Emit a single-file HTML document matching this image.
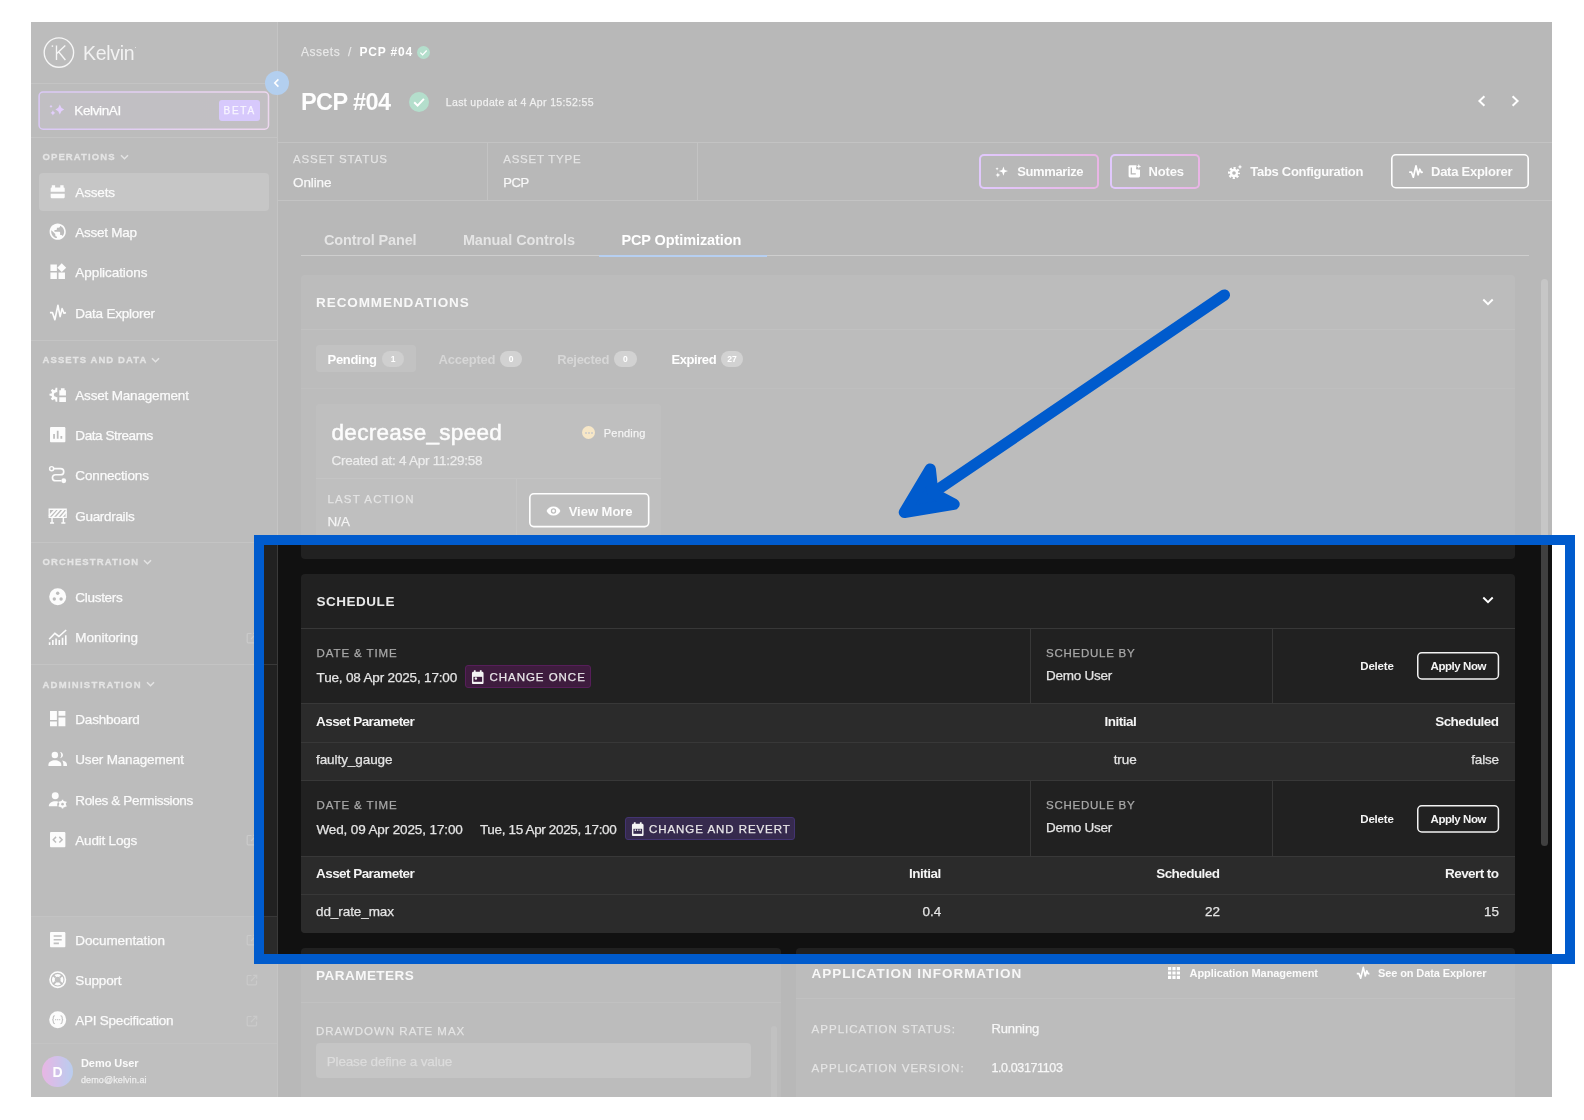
<!DOCTYPE html>
<html><head><meta charset="utf-8"><title>Kelvin - PCP #04 Schedule</title>
<style>
html,body{margin:0;padding:0;}
body{width:1584px;height:1120px;background:#fff;position:relative;overflow:hidden;font-family:"Liberation Sans",sans-serif;}
.a{position:absolute;box-sizing:border-box;}
.t{white-space:nowrap;}
#app{position:absolute;left:0;top:0;width:1584px;height:1120px;clip-path:inset(22px 32px 23px 31px);will-change:transform;}
.ov{position:absolute;background:rgba(255,255,255,0.70);}
</style></head><body>
<div id="app">
<div class="a " style="left:31.0px;top:22.0px;width:1521.0px;height:1075.0px;background:#111111;"></div>
<div class="a " style="left:31.0px;top:22.0px;width:246.0px;height:1075.0px;background:#212121;"></div>
<div class="a " style="left:31.0px;top:916.0px;width:246.0px;height:181.0px;background:#2a2a2a;"></div>
<div class="a " style="left:277.0px;top:22.0px;width:1.0px;height:1075.0px;background:#3a3a3a;"></div>
<svg class="a" style="left:42.00px;top:36.00px;" width="34" height="34" viewBox="0 0 34 34"><circle cx="16.9" cy="16.55" r="14.7" fill="none" stroke="#e0e0e0" stroke-width="1.35"/><path d="M14.5 9.5V24M23.3 9.5L14.8 17.6M16.6 15.7L23.4 24" fill="none" stroke="#e0e0e0" stroke-width="1.35"/><circle cx="10.4" cy="10.1" r="0.85" fill="#e0e0e0"/></svg>
<div class="a t" style="left:83.00px;top:41.50px;font-size:19.5px;line-height:23.00px;color:#d4d4d4;-webkit-text-stroke:0.25px #d4d4d4;letter-spacing:-0.322px;-webkit-text-stroke:0;">Kelvin</div>
<div class="a " style="left:134.6px;top:46.8px;width:1.5px;height:1.5px;background:#c8c8c8;border-radius:1px;"></div>
<div class="a " style="left:31.0px;top:83.0px;width:246.0px;height:1.0px;background:#393939;"></div>
<svg class="a" style="left:37.00px;top:90.00px;" width="234" height="42" viewBox="0 0 234 42"><defs><linearGradient id="kg" x1="0" y1="0" x2="1" y2="0"><stop offset="0" stop-color="#8448de"/><stop offset="1" stop-color="#c478c8"/></linearGradient><linearGradient id="kb" x1="0" y1="0" x2="1" y2="0"><stop offset="0" stop-color="#2f2938"/><stop offset="1" stop-color="#322a37"/></linearGradient></defs><rect x="2.1" y="2" width="229.4" height="37.2" rx="4" fill="url(#kb)" stroke="url(#kg)" stroke-width="1.5"/></svg>
<svg class="a" style="left:0.00px;top:0.00px;" width="80" height="130" viewBox="0 0 80 130"><path d="M59.80 104.50L61.38 107.70L64.20 109.50L61.38 111.30L59.80 114.50L58.22 111.30L55.40 109.50L58.22 107.70Z" fill="#a05cf5"/><path d="M52.90 110.20L53.80 111.93L55.40 112.90L53.80 113.87L52.90 115.60L52.00 113.87L50.40 112.90L52.00 111.93Z" fill="#a05cf5"/><path d="M51.00 104.70L51.54 105.72L52.50 106.30L51.54 106.88L51.00 107.90L50.46 106.88L49.50 106.30L50.46 105.72Z" fill="#a05cf5"/></svg>
<div class="a t" style="left:74.30px;top:102.50px;font-size:13.5px;line-height:16.00px;color:#f7f7f7;-webkit-text-stroke:0.25px #f7f7f7;letter-spacing:-0.375px;">KelvinAI</div>
<div class="a " style="left:219.1px;top:99.6px;width:40.9px;height:21.5px;background:#7a4cf5;border-radius:3px;"></div>
<div class="a t" style="left:223.60px;top:104.50px;font-size:10px;line-height:12.00px;color:#e7defd;-webkit-text-stroke:0.25px #e7defd;letter-spacing:1.708px;">BETA</div>
<div class="a " style="left:31.0px;top:137.0px;width:246.0px;height:1.0px;background:#393939;"></div>
<div class="a t" style="left:42.50px;top:151.00px;font-size:9.5px;line-height:11.00px;color:#a8a8a8;font-weight:700;letter-spacing:1.099px;-webkit-text-stroke:0.3px #a8a8a8;">OPERATIONS</div>
<svg class="a" style="left:119.70px;top:153.80px;" width="9" height="6" viewBox="0 0 9 6"><path d="M1 1.2L4.5 4.7L8 1.2" fill="none" stroke="#a3a3a3" stroke-width="1.5"/></svg>
<div class="a " style="left:38.6px;top:172.6px;width:230.4px;height:38.2px;background:#404040;border-radius:4px;"></div>
<div class="a t" style="left:75.30px;top:184.50px;font-size:13.5px;line-height:16.00px;color:#f0f0f0;-webkit-text-stroke:0.25px #f0f0f0;letter-spacing:-0.143px;">Assets</div>
<svg class="a" style="left:48.10px;top:182.20px;" width="19.4" height="19.4" viewBox="0 0 24 24"><path d="M4.7 4h4.1v3H4.7zM15.2 4h4.1v3h-4.1zM4.3 6.9h15.4c.6 0 1 .4 1 1v4.2H3.3V7.9c0-.6.4-1 1-1zM3.3 14.6h17.4V19c0 .6-.4 1-1 1H4.3c-.6 0-1-.4-1-1z" fill="#f5f5f5"/></svg>
<div class="a t" style="left:75.30px;top:224.50px;font-size:13.5px;line-height:16.00px;color:#f0f0f0;-webkit-text-stroke:0.25px #f0f0f0;letter-spacing:-0.247px;">Asset Map</div>
<svg class="a" style="left:48.10px;top:222.10px;" width="19.4" height="19.4" viewBox="0 0 24 24"><path d="M12 2C6.48 2 2 6.48 2 12s4.48 10 10 10 10-4.48 10-10S17.52 2 12 2zm-1 17.93c-3.95-.49-7-3.85-7-7.93 0-.62.08-1.21.21-1.79L9 15v1c0 1.1.9 2 2 2v1.93zm6.9-2.54c-.26-.81-1-1.39-1.9-1.39h-1v-3c0-.55-.45-1-1-1H8v-2h2c.55 0 1-.45 1-1V7h2c1.1 0 2-.9 2-2v-.41c2.93 1.19 5 4.06 5 7.41 0 2.08-.8 3.97-2.1 5.39z" fill="#f5f5f5"/></svg>
<div class="a t" style="left:75.30px;top:264.50px;font-size:13.5px;line-height:16.00px;color:#f0f0f0;-webkit-text-stroke:0.25px #f0f0f0;letter-spacing:-0.063px;">Applications</div>
<svg class="a" style="left:48.10px;top:262.40px;" width="19.4" height="19.4" viewBox="0 0 24 24"><path d="M3 3h8v8H3zM3 13h8v8H3zM13 13h8v8h-8zM17 1.5l5.5 5.5-5.5 5.5-5.5-5.5z" fill="#f5f5f5"/></svg>
<div class="a t" style="left:75.30px;top:305.50px;font-size:13.5px;line-height:16.00px;color:#f0f0f0;-webkit-text-stroke:0.25px #f0f0f0;letter-spacing:-0.236px;">Data Explorer</div>
<svg class="a" style="left:48.10px;top:302.90px;" width="19.4" height="19.4" viewBox="0 0 24 24"><path d="M2.4 11.9H5.5L8.5 20.7L12.3 2.8L15 16.8L17.4 6.9L19.8 12.6L22.2 11.9" fill="none" stroke="#f5f5f5" stroke-width="2" stroke-linejoin="round"/></svg>
<div class="a " style="left:31.0px;top:340.0px;width:246.0px;height:1.0px;background:#393939;"></div>
<div class="a t" style="left:42.50px;top:354.00px;font-size:9.5px;line-height:11.00px;color:#a8a8a8;font-weight:700;letter-spacing:1.093px;-webkit-text-stroke:0.3px #a8a8a8;">ASSETS AND DATA</div>
<svg class="a" style="left:151.40px;top:356.50px;" width="9" height="6" viewBox="0 0 9 6"><path d="M1 1.2L4.5 4.7L8 1.2" fill="none" stroke="#a3a3a3" stroke-width="1.5"/></svg>
<div class="a t" style="left:75.30px;top:387.50px;font-size:13.5px;line-height:16.00px;color:#f0f0f0;-webkit-text-stroke:0.25px #f0f0f0;letter-spacing:-0.180px;">Asset Management</div>
<svg class="a" style="left:48.10px;top:384.60px;" width="19.4" height="19.4" viewBox="0 0 24 24"><path d="M14 6.5h2V4h4.5v2.5h1.7V13H14zM14 15.2h8.2V21H14z" fill="#f5f5f5"/><path d="M11.5 3.3v17.4H9.4l-.5-2.6-1.3-.6-2.2 1.5-1.9-1.9 1.5-2.2-.6-1.3-2.6-.5V10.9l2.6-.5.6-1.3-1.5-2.2 1.9-1.9 2.2 1.5 1.3-.6.5-2.6z" fill="#f5f5f5"/><circle cx="9.8" cy="12" r="2.6" fill="#212121"/><path d="M9.8 9h2.5v6H9.8z" fill="#212121"/></svg>
<div class="a t" style="left:75.30px;top:427.50px;font-size:13.5px;line-height:16.00px;color:#f0f0f0;-webkit-text-stroke:0.25px #f0f0f0;letter-spacing:-0.420px;">Data Streams</div>
<svg class="a" style="left:48.10px;top:424.90px;" width="19.4" height="19.4" viewBox="0 0 24 24"><path d="M4 2.5h16c.8 0 1.5.7 1.5 1.5v16c0 .8-.7 1.5-1.5 1.5H4c-.8 0-1.5-.7-1.5-1.5V4c0-.8.7-1.5 1.5-1.5z" fill="#f5f5f5"/><path d="M7.5 11v6M12 7v10M16.5 13.5v3.5" stroke="#212121" stroke-width="2.2"/></svg>
<div class="a t" style="left:75.30px;top:467.50px;font-size:13.5px;line-height:16.00px;color:#f0f0f0;-webkit-text-stroke:0.25px #f0f0f0;letter-spacing:-0.144px;">Connections</div>
<svg class="a" style="left:48.10px;top:465.30px;" width="19.4" height="19.4" viewBox="0 0 24 24"><circle cx="4.5" cy="4.5" r="2.5" fill="none" stroke="#f5f5f5" stroke-width="1.8"/><circle cx="19.5" cy="19.5" r="3" fill="#f5f5f5"/><path d="M7 4.5h8.5c2.5 0 4 1.5 4 3.7s-1.5 3.8-4 3.8h-6c-2.5 0-4 1.5-4 3.7s1.5 3.8 4 3.8h7" fill="none" stroke="#f5f5f5" stroke-width="2"/></svg>
<div class="a t" style="left:75.30px;top:508.50px;font-size:13.5px;line-height:16.00px;color:#f0f0f0;-webkit-text-stroke:0.25px #f0f0f0;letter-spacing:-0.319px;">Guardrails</div>
<svg class="a" style="left:48.10px;top:505.60px;" width="19.4" height="19.4" viewBox="0 0 24 24"><path d="M1.5 4h21v10h-21z" fill="none" stroke="#f5f5f5" stroke-width="1.6"/><path d="M1.5 12.5L9 4.5M5.5 14l8.5-9.5M11 14l8.5-9.5M16.5 14l6-7" stroke="#f5f5f5" stroke-width="2.4"/><path d="M5 14v7M19 14v7M2.5 21h5M16.5 21h5" stroke="#f5f5f5" stroke-width="1.8"/></svg>
<div class="a " style="left:31.0px;top:542.0px;width:246.0px;height:1.0px;background:#393939;"></div>
<div class="a t" style="left:42.50px;top:556.00px;font-size:9.5px;line-height:11.00px;color:#a8a8a8;font-weight:700;letter-spacing:1.112px;-webkit-text-stroke:0.3px #a8a8a8;">ORCHESTRATION</div>
<svg class="a" style="left:142.80px;top:558.80px;" width="9" height="6" viewBox="0 0 9 6"><path d="M1 1.2L4.5 4.7L8 1.2" fill="none" stroke="#a3a3a3" stroke-width="1.5"/></svg>
<div class="a t" style="left:75.30px;top:589.50px;font-size:13.5px;line-height:16.00px;color:#f0f0f0;-webkit-text-stroke:0.25px #f0f0f0;letter-spacing:-0.287px;">Clusters</div>
<svg class="a" style="left:48.10px;top:587.20px;" width="19.4" height="19.4" viewBox="0 0 24 24"><circle cx="12" cy="12" r="10.5" fill="#f5f5f5"/><circle cx="12" cy="7.8" r="2.1" fill="#212121"/><circle cx="7.8" cy="14.8" r="2.1" fill="#212121"/><circle cx="16.2" cy="14.8" r="2.1" fill="#212121"/></svg>
<div class="a t" style="left:75.30px;top:629.50px;font-size:13.5px;line-height:16.00px;color:#f0f0f0;-webkit-text-stroke:0.25px #f0f0f0;letter-spacing:-0.036px;">Monitoring</div>
<svg class="a" style="left:48.10px;top:627.50px;" width="19.4" height="19.4" viewBox="0 0 24 24"><path d="M2 21v-3.5M6 21v-6M10 21v-8M14 21v-6M18 21v-9M22 21V9" stroke="#f5f5f5" stroke-width="2"/><path d="M1.5 14l7-7.5 5 4L22.5 2.5" fill="none" stroke="#f5f5f5" stroke-width="2"/></svg>
<svg class="a" style="left:245.80px;top:631.60px;" width="12" height="12" viewBox="0 0 12 12"><path d="M5.5 1.5H2.2C1.6 1.5 1.2 1.9 1.2 2.5V9.8C1.2 10.4 1.6 10.8 2.2 10.8H9.5C10.1 10.8 10.5 10.4 10.5 9.8V6.5" fill="none" stroke="#4d4d4d" stroke-width="1.2"/><path d="M5 7L10.3 1.7M7.2 1.3H10.7V4.8" fill="none" stroke="#4d4d4d" stroke-width="1.2"/></svg>
<div class="a " style="left:31.0px;top:664.0px;width:246.0px;height:1.0px;background:#393939;"></div>
<div class="a t" style="left:42.50px;top:679.00px;font-size:9.5px;line-height:11.00px;color:#a8a8a8;font-weight:700;letter-spacing:1.260px;-webkit-text-stroke:0.3px #a8a8a8;">ADMINISTRATION</div>
<svg class="a" style="left:145.70px;top:680.90px;" width="9" height="6" viewBox="0 0 9 6"><path d="M1 1.2L4.5 4.7L8 1.2" fill="none" stroke="#a3a3a3" stroke-width="1.5"/></svg>
<div class="a t" style="left:75.30px;top:711.50px;font-size:13.5px;line-height:16.00px;color:#f0f0f0;-webkit-text-stroke:0.25px #f0f0f0;letter-spacing:-0.205px;">Dashboard</div>
<svg class="a" style="left:48.10px;top:709.40px;" width="19.4" height="19.4" viewBox="0 0 24 24"><path d="M2.5 2.5h8.5v11H2.5zM13 2.5h8.5v6H13zM13 10.5h8.5v11H13zM2.5 15.5h8.5v6H2.5z" fill="#f5f5f5"/></svg>
<div class="a t" style="left:75.30px;top:751.50px;font-size:13.5px;line-height:16.00px;color:#f0f0f0;-webkit-text-stroke:0.25px #f0f0f0;letter-spacing:-0.175px;">User Management</div>
<svg class="a" style="left:48.10px;top:749.20px;" width="19.4" height="19.4" viewBox="0 0 24 24"><circle cx="8.5" cy="7.5" r="4" fill="#f5f5f5"/><path d="M.5 19.5c0-3.5 4-5.5 8-5.5s8 2 8 5.5V21h-16z" fill="#f5f5f5"/><path d="M15 3.7c2 .3 3.5 1.8 3.5 3.8s-1.5 3.5-3.5 3.8c.9-1 1.4-2.3 1.4-3.8s-.5-2.8-1.4-3.8zM17.5 14.3c3 .5 6 2.2 6 5.2V21h-4.5v-1.8c0-2-.6-3.7-1.5-4.9z" fill="#f5f5f5"/></svg>
<div class="a t" style="left:75.30px;top:792.50px;font-size:13.5px;line-height:16.00px;color:#f0f0f0;-webkit-text-stroke:0.25px #f0f0f0;letter-spacing:-0.369px;">Roles &amp; Permissions</div>
<svg class="a" style="left:48.10px;top:789.70px;" width="19.4" height="19.4" viewBox="0 0 24 24"><circle cx="9" cy="7" r="4.3" fill="#f5f5f5"/><path d="M1 20c0-4 4-6 8-6 1.3 0 2.6.2 3.8.6-1.1 1.3-1.6 2.8-1.4 4.4l.2 1z" fill="#f5f5f5"/><circle cx="18" cy="17.5" r="4.2" fill="#f5f5f5"/><path d="M18 12v11M13.2 14.8l9.6 5.4M22.8 14.8l-9.6 5.4" stroke="#f5f5f5" stroke-width="1.8"/><circle cx="18" cy="17.5" r="1.6" fill="#212121"/></svg>
<div class="a t" style="left:75.30px;top:832.50px;font-size:13.5px;line-height:16.00px;color:#f0f0f0;-webkit-text-stroke:0.25px #f0f0f0;letter-spacing:-0.199px;">Audit Logs</div>
<svg class="a" style="left:48.10px;top:829.90px;" width="19.4" height="19.4" viewBox="0 0 24 24"><path d="M4 2.5h16c.8 0 1.5.7 1.5 1.5v16c0 .8-.7 1.5-1.5 1.5H4c-.8 0-1.5-.7-1.5-1.5V4c0-.8.7-1.5 1.5-1.5z" fill="#f5f5f5"/><path d="M10 8.5L6.5 12l3.5 3.5M14 8.5l3.5 3.5-3.5 3.5" fill="none" stroke="#212121" stroke-width="1.8"/></svg>
<svg class="a" style="left:245.80px;top:834.00px;" width="12" height="12" viewBox="0 0 12 12"><path d="M5.5 1.5H2.2C1.6 1.5 1.2 1.9 1.2 2.5V9.8C1.2 10.4 1.6 10.8 2.2 10.8H9.5C10.1 10.8 10.5 10.4 10.5 9.8V6.5" fill="none" stroke="#4d4d4d" stroke-width="1.2"/><path d="M5 7L10.3 1.7M7.2 1.3H10.7V4.8" fill="none" stroke="#4d4d4d" stroke-width="1.2"/></svg>
<div class="a " style="left:31.0px;top:916.0px;width:246.0px;height:1.0px;background:#383838;"></div>
<div class="a t" style="left:75.30px;top:932.50px;font-size:13.5px;line-height:16.00px;color:#f0f0f0;-webkit-text-stroke:0.25px #f0f0f0;letter-spacing:-0.091px;">Documentation</div>
<svg class="a" style="left:48.10px;top:929.60px;" width="19.4" height="19.4" viewBox="0 0 24 24"><path d="M4 2.5h16c.8 0 1.5.7 1.5 1.5v16c0 .8-.7 1.5-1.5 1.5H4c-.8 0-1.5-.7-1.5-1.5V4c0-.8.7-1.5 1.5-1.5z" fill="#f5f5f5"/><path d="M7 7.5h10M7 12h10M7 16.5h6.5" stroke="#2a2a2a" stroke-width="2"/></svg>
<svg class="a" style="left:245.80px;top:933.70px;" width="12" height="12" viewBox="0 0 12 12"><path d="M5.5 1.5H2.2C1.6 1.5 1.2 1.9 1.2 2.5V9.8C1.2 10.4 1.6 10.8 2.2 10.8H9.5C10.1 10.8 10.5 10.4 10.5 9.8V6.5" fill="none" stroke="#4d4d4d" stroke-width="1.2"/><path d="M5 7L10.3 1.7M7.2 1.3H10.7V4.8" fill="none" stroke="#4d4d4d" stroke-width="1.2"/></svg>
<div class="a t" style="left:75.30px;top:972.50px;font-size:13.5px;line-height:16.00px;color:#f0f0f0;-webkit-text-stroke:0.25px #f0f0f0;letter-spacing:-0.163px;">Support</div>
<svg class="a" style="left:48.10px;top:970.20px;" width="19.4" height="19.4" viewBox="0 0 24 24"><circle cx="12" cy="12" r="10.5" fill="#f5f5f5"/><circle cx="12" cy="12" r="7.8" fill="none" stroke="#2a2a2a" stroke-width="1.4"/><circle cx="12" cy="12" r="3.6" fill="#2a2a2a"/><path d="M6.3 6.3l3.2 3.2M17.7 6.3l-3.2 3.2M6.3 17.7l3.2-3.2M17.7 17.7l-3.2-3.2" stroke="#2a2a2a" stroke-width="2.4"/></svg>
<svg class="a" style="left:245.80px;top:974.30px;" width="12" height="12" viewBox="0 0 12 12"><path d="M5.5 1.5H2.2C1.6 1.5 1.2 1.9 1.2 2.5V9.8C1.2 10.4 1.6 10.8 2.2 10.8H9.5C10.1 10.8 10.5 10.4 10.5 9.8V6.5" fill="none" stroke="#4d4d4d" stroke-width="1.2"/><path d="M5 7L10.3 1.7M7.2 1.3H10.7V4.8" fill="none" stroke="#4d4d4d" stroke-width="1.2"/></svg>
<div class="a t" style="left:75.30px;top:1012.50px;font-size:13.5px;line-height:16.00px;color:#f0f0f0;-webkit-text-stroke:0.25px #f0f0f0;letter-spacing:-0.241px;">API Specification</div>
<svg class="a" style="left:48.10px;top:1010.40px;" width="19.4" height="19.4" viewBox="0 0 24 24"><circle cx="12" cy="12" r="10.5" fill="#f5f5f5"/><path d="M8.5 7c-1.5 0-2 .7-2 2v1.5c0 .8-.4 1.5-1.3 1.5.9 0 1.3.7 1.3 1.5V15c0 1.3.5 2 2 2M15.5 7c1.5 0 2 .7 2 2v1.5c0 .8.4 1.5 1.3 1.5-.9 0-1.3.7-1.3 1.5V15c0 1.3-.5 2-2 2" fill="none" stroke="#2a2a2a" stroke-width="1.3"/><path d="M9.5 12h.01M12 12h.01M14.5 12h.01" stroke="#2a2a2a" stroke-width="1.6" stroke-linecap="round"/></svg>
<svg class="a" style="left:245.80px;top:1014.50px;" width="12" height="12" viewBox="0 0 12 12"><path d="M5.5 1.5H2.2C1.6 1.5 1.2 1.9 1.2 2.5V9.8C1.2 10.4 1.6 10.8 2.2 10.8H9.5C10.1 10.8 10.5 10.4 10.5 9.8V6.5" fill="none" stroke="#4d4d4d" stroke-width="1.2"/><path d="M5 7L10.3 1.7M7.2 1.3H10.7V4.8" fill="none" stroke="#4d4d4d" stroke-width="1.2"/></svg>
<div class="a " style="left:31.0px;top:1043.0px;width:246.0px;height:1.0px;background:#383838;"></div>
<div class="a " style="left:42.0px;top:1056.0px;width:31.0px;height:31.0px;border-radius:50%;background:linear-gradient(90deg,#b20aa6,#1558c8);"></div>
<div class="a t" style="left:52.44px;top:1063.50px;font-size:14px;line-height:17.00px;color:#ffffff;font-weight:700;">D</div>
<div class="a t" style="left:81.00px;top:1056.50px;font-size:11px;line-height:13.00px;color:#f2f2f2;font-weight:700;letter-spacing:-0.072px;">Demo User</div>
<div class="a t" style="left:81.00px;top:1074.50px;font-size:9px;line-height:11.00px;color:#c8c8c8;-webkit-text-stroke:0.25px #c8c8c8;letter-spacing:0.103px;">demo@kelvin.ai</div>
<div class="a " style="left:265.0px;top:71.4px;width:24.0px;height:24.0px;background:#025fca;border-radius:50%;"></div>
<svg class="a" style="left:271.50px;top:78.40px;" width="10" height="10" viewBox="0 0 10 10"><path d="M6.4 1.4L2.8 5L6.4 8.6" fill="none" stroke="#fff" stroke-width="1.6"/></svg>
<div class="a t" style="left:301.00px;top:45.00px;font-size:12px;line-height:14.00px;color:#b5b5b5;-webkit-text-stroke:0.25px #b5b5b5;letter-spacing:0.538px;">Assets</div>
<div class="a t" style="left:347.93px;top:45.00px;font-size:12px;line-height:14.00px;color:#b5b5b5;-webkit-text-stroke:0.25px #b5b5b5;">/</div>
<div class="a t" style="left:359.40px;top:45.00px;font-size:12px;line-height:14.00px;color:#ffffff;font-weight:700;letter-spacing:0.848px;">PCP #04</div>
<svg class="a" style="left:417.30px;top:45.50px;" width="13" height="13" viewBox="0 0 20 20"><circle cx="10" cy="10" r="10" fill="#059155"/><path d="M5.2 10.2L8.6 13.6L14.9 6.9" fill="none" stroke="#fff" stroke-width="2"/></svg>
<div class="a t" style="left:301.00px;top:88.00px;font-size:23.5px;line-height:28.00px;color:#fafafa;font-weight:700;letter-spacing:-0.605px;">PCP #04</div>
<svg class="a" style="left:408.90px;top:91.60px;" width="20" height="20" viewBox="0 0 20 20"><circle cx="10" cy="10" r="10" fill="#059155"/><path d="M5.2 10.2L8.6 13.6L14.9 6.9" fill="none" stroke="#fff" stroke-width="2"/></svg>
<div class="a t" style="left:445.80px;top:95.50px;font-size:10.5px;line-height:13.00px;color:#d0d0d0;-webkit-text-stroke:0.25px #d0d0d0;letter-spacing:0.355px;">Last update at 4 Apr 15:52:55</div>
<svg class="a" style="left:1476.60px;top:95.40px;" width="10" height="12" viewBox="0 0 10 12"><path d="M7.4 1.2L2.4 6L7.4 10.8" fill="none" stroke="#fff" stroke-width="2"/></svg>
<svg class="a" style="left:1509.70px;top:95.40px;" width="10" height="12" viewBox="0 0 10 12"><path d="M2.6 1.2L7.6 6L2.6 10.8" fill="none" stroke="#fff" stroke-width="2"/></svg>
<div class="a " style="left:278.0px;top:142.0px;width:1274.0px;height:1.0px;background:#363636;"></div>
<div class="a " style="left:278.0px;top:199.5px;width:1274.0px;height:1.0px;background:#363636;"></div>
<div class="a " style="left:487.0px;top:142.0px;width:1.0px;height:58.0px;background:#363636;"></div>
<div class="a " style="left:697.0px;top:142.0px;width:1.0px;height:58.0px;background:#363636;"></div>
<div class="a t" style="left:293.00px;top:152.00px;font-size:11.5px;line-height:14.00px;color:#a8a8a8;-webkit-text-stroke:0.25px #a8a8a8;letter-spacing:0.877px;">ASSET STATUS</div>
<div class="a t" style="left:293.00px;top:174.50px;font-size:13.5px;line-height:16.00px;color:#e6e6e6;-webkit-text-stroke:0.25px #e6e6e6;letter-spacing:-0.104px;">Online</div>
<div class="a t" style="left:503.20px;top:152.00px;font-size:11.5px;line-height:14.00px;color:#a8a8a8;-webkit-text-stroke:0.25px #a8a8a8;letter-spacing:0.775px;">ASSET TYPE</div>
<div class="a t" style="left:503.20px;top:174.50px;font-size:13px;line-height:16.00px;color:#e6e6e6;-webkit-text-stroke:0.25px #e6e6e6;letter-spacing:-0.366px;">PCP</div>
<div class="a " style="left:979.0px;top:154.0px;width:119.6px;height:35.0px;border-radius:5px;background:linear-gradient(90deg,#9848f5,#b408a6);"></div>
<div class="a " style="left:981.0px;top:156.0px;width:115.6px;height:31.0px;background:#111111;border-radius:3px;"></div>
<svg class="a" style="left:995.00px;top:164.60px;" width="13.5" height="13" viewBox="0 0 17 16"><path d="M10.6 1.6 L12.1 6.0 L16.4 7.5 L12.1 9.0 L10.6 13.4 L9.1 9.0 L4.8 7.5 L9.1 6.0Z" fill="#fff"/><path d="M3.6 9.4 L4.4 11.6 L6.6 12.4 L4.4 13.2 L3.6 15.4 L2.8 13.2 L0.6 12.4 L2.8 11.6Z" fill="#fff"/><path d="M2.6 2.6 L3.2 4.0 L4.6 4.6 L3.2 5.2 L2.6 6.6 L2.0 5.2 L0.6 4.6 L2.0 4.0Z" fill="#fff"/></svg>
<div class="a t" style="left:1017.20px;top:163.50px;font-size:13px;line-height:16.00px;color:#f2f2f2;font-weight:700;letter-spacing:-0.383px;">Summarize</div>
<div class="a " style="left:1110.0px;top:154.0px;width:89.6px;height:35.0px;border-radius:5px;background:linear-gradient(90deg,#9848f5,#b408a6);"></div>
<div class="a " style="left:1112.0px;top:156.0px;width:85.6px;height:31.0px;background:#111111;border-radius:3px;"></div>
<svg class="a" style="left:1126.50px;top:164.30px;" width="14" height="14" viewBox="0 0 14 14"><path d="M3 1.2h6.5l-.5 4 4 .6V12c0 .8-.6 1.4-1.4 1.4H3c-.8 0-1.4-.6-1.4-1.4V2.6c0-.8.6-1.4 1.4-1.4z" fill="#fff"/><path d="M4.3 3.5v6.3h4.5" fill="none" stroke="#111" stroke-width="1.3"/><path d="M11.8 0l.7 1.7 1.7.7-1.7.7-.7 1.7-.7-1.7-1.7-.7 1.7-.7z" fill="#fff"/></svg>
<div class="a t" style="left:1148.60px;top:163.50px;font-size:13px;line-height:16.00px;color:#f2f2f2;font-weight:700;letter-spacing:-0.154px;">Notes</div>
<svg class="a" style="left:1227.20px;top:163.60px;" width="16" height="16" viewBox="0 0 16 16"><circle cx="7" cy="9" r="4.7" fill="none" stroke="#fff" stroke-width="2.6" stroke-dasharray="2.1 1.59" stroke-dashoffset="1.05"/><circle cx="7" cy="9" r="4.2" fill="#fff"/><circle cx="7" cy="9" r="1.8" fill="#111"/><path d="M13 .6l.7 1.6 1.6.7-1.6.7-.7 1.6-.7-1.6-1.6-.7 1.6-.7z" fill="#fff"/></svg>
<div class="a t" style="left:1250.30px;top:163.50px;font-size:13px;line-height:16.00px;color:#f2f2f2;font-weight:700;letter-spacing:-0.299px;">Tabs Configuration</div>
<svg class="a" style="left:1390.40px;top:153.20px;" width="140" height="36.5" viewBox="0 0 140 36.5"><rect x="1.80" y="1.80" width="136.40" height="32.90" rx="4" fill="none" stroke="#fff" stroke-width="1.6"/></svg>
<svg class="a" style="left:1407.80px;top:163.70px;" width="16" height="15" viewBox="0 0 16 15"><path d="M1.2 8.2h2.3l1.8 5L8 1.8l2.1 9 1.7-5.6 1.5 3.3 1.5-.3" fill="none" stroke="#fff" stroke-width="1.7" stroke-linejoin="round"/></svg>
<div class="a t" style="left:1431.00px;top:163.50px;font-size:13px;line-height:16.00px;color:#f2f2f2;font-weight:700;letter-spacing:-0.252px;">Data Explorer</div>
<div class="a " style="left:301.0px;top:255.0px;width:1228.0px;height:1.0px;background:#5a5a5a;"></div>
<div class="a " style="left:599.0px;top:254.5px;width:167.5px;height:2.0px;background:#0a5fd0;"></div>
<div class="a t" style="left:324.00px;top:231.50px;font-size:14.5px;line-height:17.00px;color:#a8a8a8;font-weight:700;letter-spacing:-0.138px;">Control Panel</div>
<div class="a t" style="left:462.90px;top:231.50px;font-size:14.5px;line-height:17.00px;color:#a8a8a8;font-weight:700;letter-spacing:-0.098px;">Manual Controls</div>
<div class="a t" style="left:621.40px;top:231.50px;font-size:14.5px;line-height:17.00px;color:#ffffff;font-weight:700;letter-spacing:-0.098px;">PCP Optimization</div>
<div class="a " style="left:301.0px;top:275.0px;width:1214.0px;height:284.0px;background:#212121;border-radius:4px;"></div>
<div class="a t" style="left:316.10px;top:294.50px;font-size:13.5px;line-height:16.00px;color:#e8e8e8;font-weight:700;letter-spacing:0.900px;">RECOMMENDATIONS</div>
<svg class="a" style="left:1481.50px;top:297.70px;" width="12" height="8" viewBox="0 0 12 8"><path d="M1.3 1.5L6 6.2L10.7 1.5" fill="none" stroke="#fff" stroke-width="1.9"/></svg>
<div class="a " style="left:301.0px;top:329.0px;width:1214.0px;height:1.0px;background:#303030;"></div>
<div class="a " style="left:301.0px;top:388.0px;width:1214.0px;height:1.0px;background:#292929;"></div>
<div class="a " style="left:316.0px;top:345.3px;width:100.0px;height:27.1px;background:#353535;border-radius:4px;"></div>
<div class="a t" style="left:327.50px;top:351.50px;font-size:13px;line-height:16.00px;color:#ffffff;font-weight:700;letter-spacing:-0.295px;">Pending</div>
<div class="a " style="left:382.0px;top:351.3px;width:22.4px;height:15.5px;background:#5e5e5e;border-radius:8px;"></div>
<div class="a t" style="left:390.84px;top:354.00px;font-size:8.5px;line-height:10.00px;color:#ffffff;font-weight:700;">1</div>
<div class="a t" style="left:438.60px;top:351.50px;font-size:13px;line-height:16.00px;color:#787878;font-weight:700;letter-spacing:-0.245px;">Accepted</div>
<div class="a " style="left:499.8px;top:351.3px;width:22.7px;height:15.5px;background:#6a6a6a;border-radius:8px;"></div>
<div class="a t" style="left:508.79px;top:354.00px;font-size:8.5px;line-height:10.00px;color:#ffffff;font-weight:700;">0</div>
<div class="a t" style="left:557.30px;top:351.50px;font-size:13px;line-height:16.00px;color:#787878;font-weight:700;letter-spacing:-0.284px;">Rejected</div>
<div class="a " style="left:613.9px;top:351.3px;width:22.7px;height:15.5px;background:#6a6a6a;border-radius:8px;"></div>
<div class="a t" style="left:622.89px;top:354.00px;font-size:8.5px;line-height:10.00px;color:#ffffff;font-weight:700;">0</div>
<div class="a t" style="left:671.40px;top:351.50px;font-size:13px;line-height:16.00px;color:#ffffff;font-weight:700;letter-spacing:-0.414px;">Expired</div>
<div class="a " style="left:720.6px;top:351.3px;width:22.8px;height:15.5px;background:#6a6a6a;border-radius:8px;"></div>
<div class="a t" style="left:727.27px;top:354.00px;font-size:8.5px;line-height:10.00px;color:#ffffff;font-weight:700;">27</div>
<div class="a " style="left:316.0px;top:404.0px;width:344.7px;height:139.0px;background:#2b2b2b;border-radius:4px;"></div>
<div class="a t" style="left:331.50px;top:419.00px;font-size:22.5px;line-height:27.00px;color:#f4f4f4;-webkit-text-stroke:0.25px #f4f4f4;letter-spacing:0.303px;-webkit-text-stroke:0.5px #f4f4f4;">decrease_speed</div>
<div class="a " style="left:582.3px;top:426.3px;width:13.2px;height:13.2px;background:#e4af44;border-radius:50%;"></div>
<div class="a " style="left:585.0px;top:432.0px;width:2.0px;height:2.0px;background:#505050;border-radius:1px;"></div>
<div class="a " style="left:588.0px;top:432.0px;width:2.0px;height:2.0px;background:#505050;border-radius:1px;"></div>
<div class="a " style="left:591.0px;top:432.0px;width:2.0px;height:2.0px;background:#505050;border-radius:1px;"></div>
<div class="a t" style="left:603.80px;top:426.50px;font-size:11px;line-height:13.00px;color:#dcdcdc;-webkit-text-stroke:0.25px #dcdcdc;letter-spacing:0.189px;">Pending</div>
<div class="a t" style="left:331.50px;top:452.50px;font-size:13.5px;line-height:16.00px;color:#c4c4c4;-webkit-text-stroke:0.25px #c4c4c4;letter-spacing:-0.258px;">Created at: 4 Apr 11:29:58</div>
<div class="a " style="left:316.0px;top:478.0px;width:344.7px;height:1.0px;background:#3a3a3a;"></div>
<div class="a " style="left:516.0px;top:478.0px;width:1.0px;height:65.0px;background:#3a3a3a;"></div>
<div class="a t" style="left:327.50px;top:492.00px;font-size:11.5px;line-height:14.00px;color:#a8a8a8;-webkit-text-stroke:0.25px #a8a8a8;letter-spacing:1.144px;">LAST ACTION</div>
<div class="a t" style="left:327.50px;top:513.50px;font-size:13.5px;line-height:16.00px;color:#dcdcdc;-webkit-text-stroke:0.25px #dcdcdc;">N/A</div>
<svg class="a" style="left:528.20px;top:492.40px;" width="122.5" height="36.4" viewBox="0 0 122.5 36.4"><rect x="1.80" y="1.80" width="118.90" height="32.80" rx="4" fill="none" stroke="#fff" stroke-width="1.6"/></svg>
<svg class="a" style="left:545.80px;top:505.30px;" width="15" height="12" viewBox="0 0 15 12"><path d="M7.5 1.5C4.2 1.5 1.7 3.5.6 6c1.1 2.5 3.6 4.5 6.9 4.5S13.3 8.5 14.4 6C13.3 3.5 10.8 1.5 7.5 1.5z" fill="#fff"/><circle cx="7.5" cy="6" r="2.7" fill="#212121"/><circle cx="7.5" cy="6" r="1.4" fill="#fff"/></svg>
<div class="a t" style="left:568.70px;top:503.50px;font-size:13px;line-height:16.00px;color:#f4f4f4;font-weight:700;letter-spacing:-0.020px;">View More</div>
<div class="a " style="left:301.0px;top:574.0px;width:1214.0px;height:359.0px;background:#212121;border-radius:4px;"></div>
<div class="a t" style="left:316.40px;top:593.50px;font-size:13.5px;line-height:16.00px;color:#e8e8e8;font-weight:700;letter-spacing:0.535px;">SCHEDULE</div>
<svg class="a" style="left:1481.60px;top:596.20px;" width="12" height="8" viewBox="0 0 12 8"><path d="M1.3 1.5L6 6.2L10.7 1.5" fill="none" stroke="#fff" stroke-width="1.9"/></svg>
<div class="a " style="left:301.0px;top:703.0px;width:1214.0px;height:77.0px;background:#2b2b2b;"></div>
<div class="a " style="left:301.0px;top:628.0px;width:1214.0px;height:1.0px;background:#383838;"></div>
<div class="a " style="left:301.0px;top:703.0px;width:1214.0px;height:1.0px;background:#383838;"></div>
<div class="a " style="left:301.0px;top:742.0px;width:1214.0px;height:1.0px;background:#383838;"></div>
<div class="a " style="left:1030.0px;top:628.0px;width:1.0px;height:75.0px;background:#383838;"></div>
<div class="a " style="left:1272.0px;top:628.0px;width:1.0px;height:75.0px;background:#383838;"></div>
<div class="a t" style="left:316.60px;top:646.00px;font-size:11.5px;line-height:14.00px;color:#a8a8a8;-webkit-text-stroke:0.25px #a8a8a8;letter-spacing:0.886px;">DATE &amp; TIME</div>
<div class="a t" style="left:316.60px;top:669.50px;font-size:13.5px;line-height:16.00px;color:#e4e4e4;-webkit-text-stroke:0.25px #e4e4e4;letter-spacing:-0.170px;">Tue, 08 Apr 2025, 17:00</div>
<div class="a " style="left:465.3px;top:665.2px;width:125.6px;height:22.8px;background:#3e1c3e;border:1px solid #571e5a;border-radius:3px;"></div>
<svg class="a" style="left:471.20px;top:669.50px;" width="13.5" height="14.5" viewBox="0 0 12.4 14"><path d="M2 1.8h8.4c.8 0 1.4.6 1.4 1.4v9.2c0 .8-.6 1.4-1.4 1.4H2c-.8 0-1.4-.6-1.4-1.4V3.2c0-.8.6-1.4 1.4-1.4z" fill="#f4f4f4"/><path d="M3.3 .2v2.8M9.1 .2v2.8" stroke="#f4f4f4" stroke-width="1.7"/><path d="M2 6.6h8.4v4.8H2z" fill="#3e1c3e"/><circle cx="4.4" cy="8.3" r="1.2" fill="#f0f0f0"/></svg>
<div class="a t" style="left:489.50px;top:670.00px;font-size:11.5px;line-height:14.00px;color:#e8e6e8;-webkit-text-stroke:0.25px #e8e6e8;letter-spacing:0.968px;">CHANGE ONCE</div>
<div class="a t" style="left:1046.00px;top:646.00px;font-size:11.5px;line-height:14.00px;color:#a8a8a8;-webkit-text-stroke:0.25px #a8a8a8;letter-spacing:0.754px;">SCHEDULE BY</div>
<div class="a t" style="left:1046.00px;top:667.50px;font-size:13.5px;line-height:16.00px;color:#e4e4e4;-webkit-text-stroke:0.25px #e4e4e4;letter-spacing:-0.245px;">Demo User</div>
<div class="a t" style="left:1360.30px;top:659.00px;font-size:11.5px;line-height:14.00px;color:#f4f4f4;font-weight:700;letter-spacing:-0.203px;">Delete</div>
<svg class="a" style="left:1416.30px;top:651.20px;" width="84.2" height="29.7" viewBox="0 0 84.2 29.7"><rect x="1.75" y="1.75" width="80.70" height="26.20" rx="4" fill="none" stroke="#f2f2f2" stroke-width="1.5"/></svg>
<div class="a t" style="left:1430.60px;top:659.00px;font-size:11.5px;line-height:14.00px;color:#f4f4f4;font-weight:700;letter-spacing:-0.451px;">Apply Now</div>
<div class="a t" style="left:316.00px;top:713.50px;font-size:13.5px;line-height:16.00px;color:#f4f4f4;font-weight:700;letter-spacing:-0.554px;">Asset Parameter</div>
<div class="a t" style="left:1104.50px;top:713.50px;font-size:13.5px;line-height:16.00px;color:#f4f4f4;font-weight:700;letter-spacing:-0.508px;">Initial</div>
<div class="a t" style="left:1435.20px;top:713.50px;font-size:13.5px;line-height:16.00px;color:#f4f4f4;font-weight:700;letter-spacing:-0.557px;">Scheduled</div>
<div class="a t" style="left:316.00px;top:751.50px;font-size:13.5px;line-height:16.00px;color:#e4e4e4;-webkit-text-stroke:0.25px #e4e4e4;letter-spacing:-0.074px;">faulty_gauge</div>
<div class="a t" style="left:1113.70px;top:751.50px;font-size:13.5px;line-height:16.00px;color:#e4e4e4;-webkit-text-stroke:0.25px #e4e4e4;letter-spacing:-0.087px;">true</div>
<div class="a t" style="left:1471.30px;top:751.50px;font-size:13.5px;line-height:16.00px;color:#e4e4e4;-webkit-text-stroke:0.25px #e4e4e4;letter-spacing:-0.204px;">false</div>
<div class="a " style="left:301.0px;top:856.0px;width:1214.0px;height:77.0px;background:#2b2b2b;border-radius:0 0 4px 4px;"></div>
<div class="a " style="left:301.0px;top:780.2px;width:1214.0px;height:1.0px;background:#383838;"></div>
<div class="a " style="left:301.0px;top:856.0px;width:1214.0px;height:1.0px;background:#383838;"></div>
<div class="a " style="left:301.0px;top:894.0px;width:1214.0px;height:1.0px;background:#383838;"></div>
<div class="a " style="left:1030.0px;top:780.2px;width:1.0px;height:75.8px;background:#383838;"></div>
<div class="a " style="left:1272.0px;top:780.2px;width:1.0px;height:75.8px;background:#383838;"></div>
<div class="a t" style="left:316.60px;top:798.00px;font-size:11.5px;line-height:14.00px;color:#a8a8a8;-webkit-text-stroke:0.25px #a8a8a8;letter-spacing:0.886px;">DATE &amp; TIME</div>
<div class="a t" style="left:316.40px;top:821.50px;font-size:13.5px;line-height:16.00px;color:#e4e4e4;-webkit-text-stroke:0.25px #e4e4e4;letter-spacing:-0.123px;">Wed, 09 Apr 2025, 17:00</div>
<div class="a t" style="left:479.90px;top:821.50px;font-size:13.5px;line-height:16.00px;color:#e4e4e4;-webkit-text-stroke:0.25px #e4e4e4;letter-spacing:-0.339px;">Tue, 15 Apr 2025, 17:00</div>
<div class="a " style="left:625.0px;top:817.4px;width:170.0px;height:22.8px;background:#362a4e;border:1px solid #433472;border-radius:3px;"></div>
<svg class="a" style="left:630.90px;top:821.70px;" width="13.5" height="14.5" viewBox="0 0 12.4 14"><path d="M2 1.8h8.4c.8 0 1.4.6 1.4 1.4v9.2c0 .8-.6 1.4-1.4 1.4H2c-.8 0-1.4-.6-1.4-1.4V3.2c0-.8.6-1.4 1.4-1.4z" fill="#f4f4f4"/><path d="M3.3 .2v2.8M9.1 .2v2.8" stroke="#f4f4f4" stroke-width="1.7"/><path d="M2 6.6h8.4v4.8H2z" fill="#362a4e"/><circle cx="3.9" cy="7.9" r=".8" fill="#f0f0f0"/><circle cx="6.2" cy="7.9" r=".8" fill="#f0f0f0"/><circle cx="8.5" cy="7.9" r=".8" fill="#f0f0f0"/></svg>
<div class="a t" style="left:649.00px;top:822.00px;font-size:11.5px;line-height:14.00px;color:#e8e6e8;-webkit-text-stroke:0.25px #e8e6e8;letter-spacing:0.945px;">CHANGE AND REVERT</div>
<div class="a t" style="left:1046.00px;top:798.00px;font-size:11.5px;line-height:14.00px;color:#a8a8a8;-webkit-text-stroke:0.25px #a8a8a8;letter-spacing:0.754px;">SCHEDULE BY</div>
<div class="a t" style="left:1046.00px;top:819.50px;font-size:13.5px;line-height:16.00px;color:#e4e4e4;-webkit-text-stroke:0.25px #e4e4e4;letter-spacing:-0.245px;">Demo User</div>
<div class="a t" style="left:1360.30px;top:812.00px;font-size:11.5px;line-height:14.00px;color:#f4f4f4;font-weight:700;letter-spacing:-0.203px;">Delete</div>
<svg class="a" style="left:1416.30px;top:804.00px;" width="84.2" height="29.7" viewBox="0 0 84.2 29.7"><rect x="1.75" y="1.75" width="80.70" height="26.20" rx="4" fill="none" stroke="#f2f2f2" stroke-width="1.5"/></svg>
<div class="a t" style="left:1430.60px;top:812.00px;font-size:11.5px;line-height:14.00px;color:#f4f4f4;font-weight:700;letter-spacing:-0.451px;">Apply Now</div>
<div class="a t" style="left:316.00px;top:865.50px;font-size:13.5px;line-height:16.00px;color:#f4f4f4;font-weight:700;letter-spacing:-0.554px;">Asset Parameter</div>
<div class="a t" style="left:909.00px;top:865.50px;font-size:13.5px;line-height:16.00px;color:#f4f4f4;font-weight:700;letter-spacing:-0.508px;">Initial</div>
<div class="a t" style="left:1156.20px;top:865.50px;font-size:13.5px;line-height:16.00px;color:#f4f4f4;font-weight:700;letter-spacing:-0.557px;">Scheduled</div>
<div class="a t" style="left:1445.00px;top:865.50px;font-size:13.5px;line-height:16.00px;color:#f4f4f4;font-weight:700;letter-spacing:-0.564px;">Revert to</div>
<div class="a t" style="left:316.00px;top:903.50px;font-size:13.5px;line-height:16.00px;color:#e4e4e4;-webkit-text-stroke:0.25px #e4e4e4;letter-spacing:-0.079px;">dd_rate_max</div>
<div class="a t" style="left:922.44px;top:903.50px;font-size:13.5px;line-height:16.00px;color:#e4e4e4;-webkit-text-stroke:0.25px #e4e4e4;">0.4</div>
<div class="a t" style="left:1204.99px;top:903.50px;font-size:13.5px;line-height:16.00px;color:#e4e4e4;-webkit-text-stroke:0.25px #e4e4e4;">22</div>
<div class="a t" style="left:1483.99px;top:903.50px;font-size:13.5px;line-height:16.00px;color:#e4e4e4;-webkit-text-stroke:0.25px #e4e4e4;">15</div>
<div class="a " style="left:301.0px;top:948.0px;width:480.0px;height:159.0px;background:#212121;border-radius:4px;"></div>
<div class="a t" style="left:316.00px;top:967.50px;font-size:13.5px;line-height:16.00px;color:#e8e8e8;font-weight:700;letter-spacing:0.477px;">PARAMETERS</div>
<div class="a " style="left:301.0px;top:1002.0px;width:480.0px;height:1.0px;background:#303030;"></div>
<div class="a t" style="left:316.00px;top:1024.00px;font-size:11.5px;line-height:14.00px;color:#a8a8a8;-webkit-text-stroke:0.25px #a8a8a8;letter-spacing:1.003px;">DRAWDOWN RATE MAX</div>
<div class="a " style="left:316.0px;top:1043.0px;width:435.0px;height:34.5px;background:#3c3c3c;border-radius:4px;"></div>
<div class="a t" style="left:326.80px;top:1053.50px;font-size:13.5px;line-height:16.00px;color:#8c8c8c;-webkit-text-stroke:0.25px #8c8c8c;letter-spacing:-0.179px;">Please define a value</div>
<div class="a " style="left:770.5px;top:1026.3px;width:6.7px;height:80.7px;background:#303030;border-radius:4px;"></div>
<div class="a " style="left:796.4px;top:948.0px;width:718.6px;height:159.0px;background:#212121;border-radius:4px;"></div>
<div class="a t" style="left:811.60px;top:965.50px;font-size:13.5px;line-height:16.00px;color:#e8e8e8;font-weight:700;letter-spacing:0.960px;">APPLICATION INFORMATION</div>
<div class="a " style="left:796.4px;top:998.0px;width:718.6px;height:1.0px;background:#303030;"></div>
<svg class="a" style="left:1168.20px;top:967.20px;" width="11.8" height="11.8" viewBox="0 0 11.8 11.8"><path d="M0 0h3.2v3.2H0zM4.4 0h3.2v3.2H4.4zM8.8 0H12v3.2H8.8zM0 4.4h3.2v3.2H0zM4.4 4.4h3.2v3.2H4.4zM8.8 4.4H12v3.2H8.8zM0 8.8h3.2V12H0zM4.4 8.8h3.2V12H4.4zM8.8 8.8H12V12H8.8z" fill="#fff"/></svg>
<div class="a t" style="left:1189.60px;top:966.50px;font-size:11px;line-height:13.00px;color:#f0f0f0;font-weight:700;letter-spacing:-0.084px;">Application Management</div>
<svg class="a" style="left:1355.60px;top:966.00px;" width="14" height="14" viewBox="0 0 14 14"><path d="M.8 7.6h2.2l1.7 4.6L7.3 1.4l2 8.6 1.5-5.2 1.3 3 1.3-.2" fill="none" stroke="#fff" stroke-width="1.6" stroke-linejoin="round"/></svg>
<div class="a t" style="left:1378.00px;top:966.50px;font-size:11px;line-height:13.00px;color:#f0f0f0;font-weight:700;letter-spacing:-0.108px;">See on Data Explorer</div>
<div class="a t" style="left:811.60px;top:1022.00px;font-size:11.5px;line-height:14.00px;color:#a8a8a8;-webkit-text-stroke:0.25px #a8a8a8;letter-spacing:1.009px;">APPLICATION STATUS:</div>
<div class="a t" style="left:991.40px;top:1020.50px;font-size:13px;line-height:16.00px;color:#e4e4e4;-webkit-text-stroke:0.25px #e4e4e4;letter-spacing:-0.087px;">Running</div>
<div class="a t" style="left:811.60px;top:1061.00px;font-size:11.5px;line-height:14.00px;color:#a8a8a8;-webkit-text-stroke:0.25px #a8a8a8;letter-spacing:0.982px;">APPLICATION VERSION:</div>
<div class="a t" style="left:991.40px;top:1060.50px;font-size:12.5px;line-height:15.00px;color:#e4e4e4;-webkit-text-stroke:0.25px #e4e4e4;letter-spacing:-0.366px;">1.0.03171103</div>
<div class="a " style="left:1541.0px;top:279.0px;width:7.0px;height:567.0px;background:#404040;border-radius:4px;"></div>
<div class="ov" style="left:0;top:0;width:1584px;height:535px;"></div>
<div class="ov" style="left:0;top:964px;width:1584px;height:156px;"></div>
<div class="ov" style="left:0;top:535px;width:254px;height:429px;"></div>
</div>
<div class="a" style="left:254px;top:535px;width:1321px;height:429px;border:10px solid #005bcd;"></div>
<svg class="a" style="left:0;top:0;" width="1584" height="1120" viewBox="0 0 1584 1120"><path d="M1224.4 295L934 492.2" stroke="#005bcd" stroke-width="11.2" stroke-linecap="round" fill="none"/><path d="M904.4 512.3L930.2 469.1L932.8 493L954 504.2Z" fill="#005bcd" stroke="#005bcd" stroke-width="11.4" stroke-linejoin="round"/></svg>
</body></html>
